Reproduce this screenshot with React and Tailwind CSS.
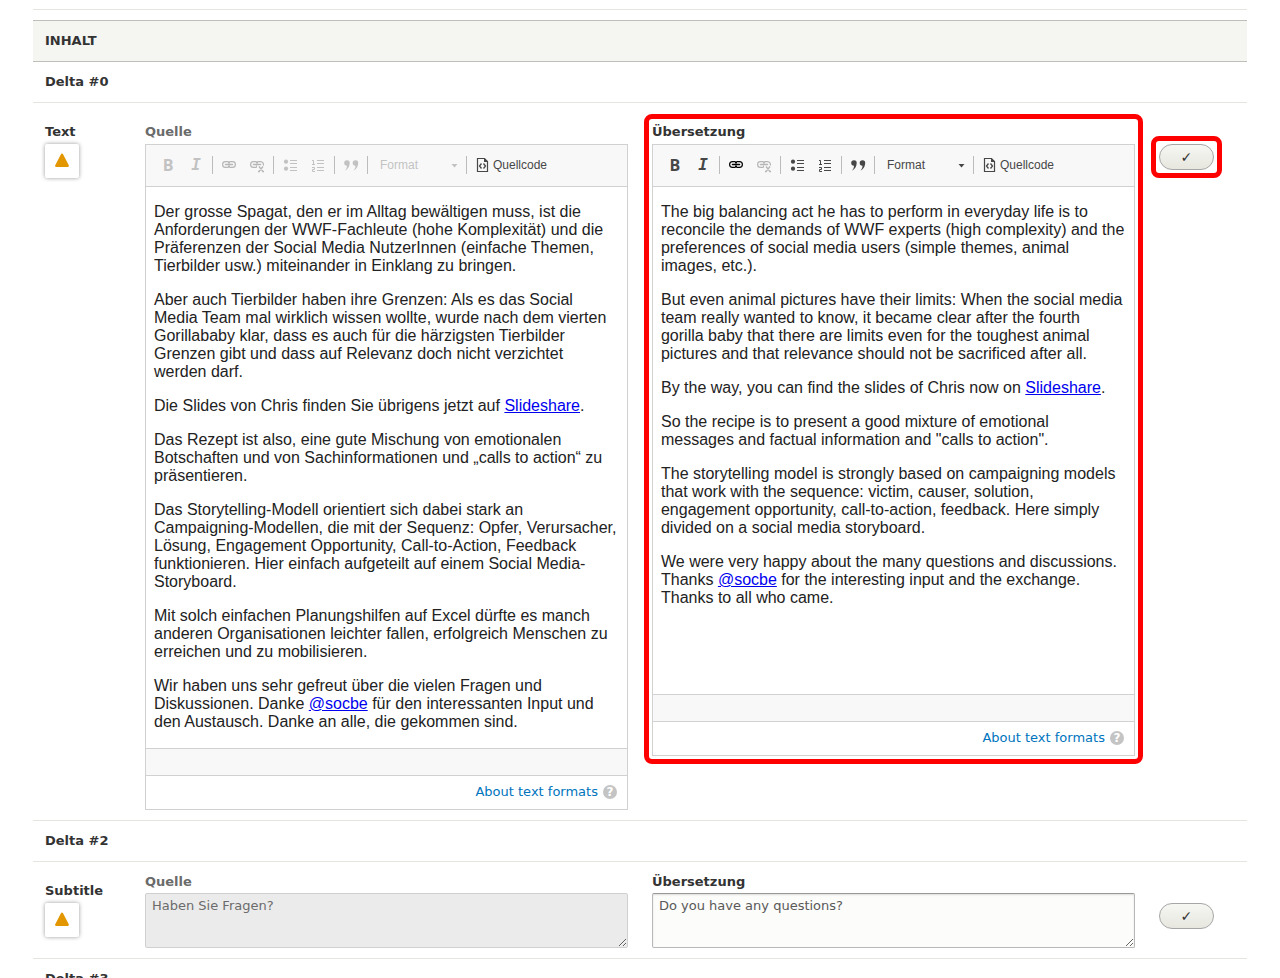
import React, { useState } from 'react';

const sourceParagraphs = [
  ['Der grosse Spagat, den er im Alltag bewältigen muss, ist die Anforderungen der WWF-Fachleute (hohe Komplexität) und die Präferenzen der Social Media NutzerInnen (einfache Themen, Tierbilder usw.) miteinander in Einklang zu bringen.'],
  ['Aber auch Tierbilder haben ihre Grenzen: Als es das Social Media Team mal wirklich wissen wollte, wurde nach dem vierten Gorillababy klar, dass es auch für die härzigsten Tierbilder Grenzen gibt und dass auf Relevanz doch nicht verzichtet werden darf.'],
  ['Die Slides von Chris finden Sie übrigens jetzt auf ', { anchor: 'Slideshare' }, '.'],
  ['Das Rezept ist also, eine gute Mischung von emotionalen Botschaften und von Sachinformationen und „calls to action“ zu präsentieren.'],
  ['Das Storytelling-Modell orientiert sich dabei stark an Campaigning-Modellen, die mit der Sequenz: Opfer, Verursacher, Lösung, Engagement Opportunity, Call-to-Action, Feedback funktionieren. Hier einfach aufgeteilt auf einem Social Media-Storyboard.'],
  ['Mit solch einfachen Planungshilfen auf Excel dürfte es manch anderen Organisationen leichter fallen, erfolgreich Menschen zu erreichen und zu mobilisieren.'],
  ['Wir haben uns sehr gefreut über die vielen Fragen und Diskussionen. Danke ', { anchor: '@socbe' }, ' für den interessanten Input und den Austausch. Danke an alle, die gekommen sind.'],
];

const targetParagraphs = [
  ['The big balancing act he has to perform in everyday life is to reconcile the demands of WWF experts (high complexity) and the preferences of social media users (simple themes, animal images, etc.).'],
  ['But even animal pictures have their limits: When the social media team really wanted to know, it became clear after the fourth gorilla baby that there are limits even for the toughest animal pictures and that relevance should not be sacrificed after all.'],
  ['By the way, you can find the slides of Chris now on ', { anchor: 'Slideshare' }, '.'],
  ['So the recipe is to present a good mixture of emotional messages and factual information and "calls to action".'],
  ['The storytelling model is strongly based on campaigning models that work with the sequence: victim, causer, solution, engagement opportunity, call-to-action, feedback. Here simply divided on a social media storyboard.'],
  ['We were very happy about the many questions and discussions. Thanks ', { anchor: '@socbe' }, ' for the interesting input and the exchange. Thanks to all who came.'],
];

function LinkIcon() {
  return (
    <svg width="16" height="16" viewBox="0 0 16 16" fill="none" stroke="currentColor">
      <path d="M7.500 4.600H4.500a2.900 2.900 0 0 0 0 5.800h3M8.500 4.600h3a2.900 2.900 0 0 1 0 5.800h-3" strokeWidth="1.200" />
      <path d="M7.500 4.500v2M8.500 4.500v2M7.500 8.500v2M8.500 8.500v2" strokeWidth="1" />
      <path d="M4.500 7.500h7" strokeWidth="1.500" strokeLinecap="round" />
    </svg>
  );
}

function UnlinkIcon() {
  return (
    <svg width="16" height="16" viewBox="0 0 16 16" fill="none" stroke="currentColor">
      <path d="M7.500 4.600H4.500a2.900 2.900 0 0 0 0 5.800h3M8.500 4.600h3a2.900 2.900 0 0 1 2.700 4" strokeWidth="1.200" />
      <path d="M7.500 4.500v2M8.500 4.500v2M7.500 8.500v2" strokeWidth="1" />
      <path d="M4.500 7.500h7" strokeWidth="1.500" strokeLinecap="round" />
      <path d="m10 9.500 4 5M14 9.500l-4 5M9 14.500h2M13 14.500h2" strokeWidth="1.300" />
    </svg>
  );
}

function BulletIcon() {
  return (
    <svg width="16" height="16" viewBox="0 0 16 16" fill="currentColor">
      <circle cx="4" cy="4.700" r="2.100" />
      <circle cx="4" cy="11.700" r="2.100" />
      <path d="M8 3h7v1H8zM8 6h7v1H8zM8 10h7v1H8zM8 13h7v1H8z" />
    </svg>
  );
}

function NumberIcon() {
  return (
    <svg width="16" height="16" viewBox="0 0 16 16" fill="currentColor">
      <path d="M2 3.500h1.500v4M2 7.500h3" fill="none" stroke="currentColor" />
      <path d="M2 10.500h2.500v2h-2v2H5" fill="none" stroke="currentColor" />
      <path d="M7 3h7v1H7zM7 6h7v1H7zM7 10h7v1H7zM7 13h7v1H7z" />
    </svg>
  );
}

function QuoteIcon() {
  return (
    <svg width="16" height="16" viewBox="0 0 16 16" fill="currentColor">
      <path d="M4 3.200a2.700 2.700 0 0 1 2.700 2.900c0 3.200-1.700 6-4.700 7.600 1.200-1.400 1.900-2.900 2-4.900a2.800 2.800 0 0 1 0-5.600z" />
      <path d="M12.500 3.200a2.700 2.700 0 0 1 2.700 2.900c0 3.200-1.700 6-4.700 7.600 1.200-1.400 1.900-2.900 2-4.900a2.800 2.800 0 0 1 0-5.600z" />
    </svg>
  );
}

function SourceIcon() {
  return (
    <svg width="16" height="16" viewBox="0 0 16 16" fill="none" stroke="#474747">
      <path d="M2.500 1.500h7l3 3v10h-10z" strokeWidth="1.200" />
      <path d="M9 1v4h4z" fill="#474747" stroke="none" />
      <path d="M6.500 6.500 4.500 9l2 2.500M8.500 6.500l2 2.500-2 2.500" strokeWidth="1.300" />
    </svg>
  );
}

function Separator() {
  return <span className="mx-[2px] h-[18px] w-px bg-[#bcbcbc]" />;
}

function ToolButton({ label, disabled, className = 'text-[#474747]', children }) {
  return (
    <button
      type="button"
      aria-label={label}
      disabled={disabled}
      className={`flex h-6 w-7 items-center justify-center disabled:opacity-30 ${className}`}
    >
      {children}
    </button>
  );
}

function Toolbar({ disabled }) {
  return (
    <div className="flex h-[42px] items-center border-b border-[#d1d1d1] bg-[#f8f8f8] px-2 pb-px font-['Liberation_Sans',Arial,sans-serif] text-xs">
      <ToolButton label="Fett" disabled={disabled}>
        <span className="font-['Open_Sans',sans-serif] text-base leading-4 font-bold">B</span>
      </ToolButton>
      <ToolButton label="Kursiv" disabled={disabled}>
        <span className="font-['DejaVu_Sans_Mono',monospace] text-base leading-4 font-bold italic">I</span>
      </ToolButton>
      <Separator />
      <ToolButton label="Link" disabled={disabled} className={disabled ? 'text-[#222]' : 'text-black'}>
        <LinkIcon />
      </ToolButton>
      <ToolButton label="Link entfernen" disabled className="text-[#222]">
        <UnlinkIcon />
      </ToolButton>
      <Separator />
      <ToolButton label="Liste" disabled={disabled}>
        <BulletIcon />
      </ToolButton>
      <ToolButton label="Nummerierte Liste" disabled={disabled}>
        <NumberIcon />
      </ToolButton>
      <Separator />
      <ToolButton label="Zitatblock" disabled={disabled}>
        <QuoteIcon />
      </ToolButton>
      <Separator />
      <div className={`relative ${disabled ? 'opacity-30' : ''}`}>
        <select
          aria-label="Format"
          disabled={disabled}
          className="h-6 w-[94px] appearance-none bg-transparent pl-[10px] text-[#474747] opacity-100"
        >
          <option>Format</option>
        </select>
        <svg className="pointer-events-none absolute top-[11px] right-[6px]" width="7" height="4" viewBox="0 0 7 4">
          <path d="M0.500 0h6l-3 3.500z" fill="#474747" />
        </svg>
      </div>
      <Separator />
      <button type="button" className="flex h-6 items-center gap-[2px] px-[6px] text-[#474747]">
        <SourceIcon />
        Quellcode
      </button>
    </div>
  );
}

function Editor({ label, paragraphs, readOnly }) {
  return (
    <div role="group" aria-label={label}>
      <div className={`mb-[3px] pt-px leading-[18px] font-bold ${readOnly ? 'text-[#6b6b6b]' : 'text-[#333]'}`}>{label}</div>
      <div className="border border-[#d1d1d1]">
        <Toolbar disabled={readOnly} />
        <div
          role="textbox"
          aria-multiline="true"
          aria-label={label}
          aria-readonly={readOnly}
          contentEditable={!readOnly}
          suppressContentEditableWarning
          className={`space-y-4 px-2 py-4 font-['Liberation_Sans',Arial,sans-serif] text-base leading-[18px] text-[#222] ${readOnly ? 'min-h-[561px]' : 'min-h-[507px]'}`}
        >
          {paragraphs.map((parts, i) => (
            <p key={i}>
              {parts.map((part, j) =>
                typeof part === 'string' ? (
                  part
                ) : (
                  <a key={j} href="#" className="text-[#0000ee] underline">{part.anchor}</a>
                )
              )}
            </p>
          ))}
        </div>
        <div className="h-7 border-y border-[#d1d1d1] bg-[#f8f8f8]" />
        <div className="flex h-[33px] items-center justify-end pr-[10px] pb-px">
          <a href="#" className="flex items-center gap-[5px] text-[#0074bd]">
            About text formats
            <span className="flex size-[14px] items-center justify-center rounded-full bg-[#c4c4c4] text-xs leading-[14px] font-bold text-white">?</span>
          </a>
        </div>
      </div>
    </div>
  );
}

function TextField({ id, label, value, disabled }) {
  const [text, setText] = useState(value);
  return (
    <div>
      <label htmlFor={id} className={`mb-[2px] block pt-px leading-[18px] font-bold ${disabled ? 'text-[#6b6b6b]' : 'text-[#333]'}`}>
        {label}
      </label>
      <textarea
        id={id}
        value={text}
        disabled={disabled}
        onChange={(e) => setText(e.target.value)}
        className="block h-[55px] w-full rounded-[2px] border border-[#b8b8b8] border-t-[#999] bg-[#fcfcfa] px-[6px] py-[3px] leading-[18px] text-[#595959] shadow-[inset_0_1px_2px_rgba(0,0,0,0.125)] disabled:border-[#d0d0d0] disabled:bg-[#ebebeb] disabled:text-[#6b6b6b] disabled:shadow-none"
      />
    </div>
  );
}

function ItemLabel({ children }) {
  return (
    <th scope="row" className="px-3 pt-5 text-left align-top font-bold">
      <div className="mb-[3px] leading-[18px]">{children}</div>
      <button
        type="button"
        aria-label="Status"
        className="flex size-[34px] items-center justify-center rounded-[2px] bg-white shadow-[0_0_4px_rgba(0,0,0,0.4)]"
      >
        <svg width="16" height="16" viewBox="0 0 16 16">
          <path d="M8 1.800 13.700 12.700H2.300z" fill="#e29700" stroke="#e29700" strokeWidth="2.400" strokeLinejoin="round" />
        </svg>
      </button>
    </th>
  );
}

function Highlight() {
  return <span className="pointer-events-none absolute -inset-2 rounded-lg border-5 border-[#ff0000]" />;
}

function ReviewCell({ highlighted }) {
  return (
    <td className="px-3 pt-[41px] align-top">
      <div className="relative w-[55px]">
        <button
          type="button"
          aria-label="Geprüft"
          className="flex h-[26px] w-full items-center justify-center rounded-full border border-[#a6a6a6] bg-linear-to-b from-[#f6f6f3] to-[#e7e7df] text-sm text-[#333]"
        >
          ✓
        </button>
        {highlighted && <Highlight />}
      </div>
    </td>
  );
}

function DeltaRow({ children }) {
  return (
    <tr>
      <th colSpan={4} className="h-[41px] border-b border-[#e6e4df] px-3 text-left font-bold">
        {children}
      </th>
    </tr>
  );
}

export default function App() {
  return (
    <div className="h-screen overflow-hidden bg-white px-[33px] font-['DejaVu_Sans',sans-serif] text-[13px] leading-[18px] text-[#333]">
      <div className="mb-[10px] h-[10px] border-b border-[#e6e4df]" />
      <table className="w-full table-fixed border-separate border-spacing-0">
        <colgroup>
          <col className="w-[100px]" />
          <col />
          <col />
          <col className="w-[100px]" />
        </colgroup>
        <thead>
          <tr>
            <th colSpan={4} className="h-[42px] border-y border-[#bfbfba] bg-[#f5f5f2] px-3 text-left font-bold uppercase">
              Inhalt
            </th>
          </tr>
        </thead>
        <tbody>
          <DeltaRow>Delta #0</DeltaRow>
          <tr className="*:border-b *:border-[#e6e4df]">
            <ItemLabel>Text</ItemLabel>
            <td className="px-3 pt-[19px] pb-[10px] align-top">
              <Editor label="Quelle" paragraphs={sourceParagraphs} readOnly />
            </td>
            <td className="px-3 pt-[19px] pb-[10px] align-top">
              <div className="relative">
                <Editor label="Übersetzung" paragraphs={targetParagraphs} />
                <Highlight />
              </div>
            </td>
            <ReviewCell highlighted />
          </tr>
          <DeltaRow>Delta #2</DeltaRow>
          <tr className="*:border-b *:border-[#e6e4df]">
            <ItemLabel>Subtitle</ItemLabel>
            <td className="px-3 py-[10px] align-top">
              <TextField id="subtitle-source" label="Quelle" value="Haben Sie Fragen?" disabled />
            </td>
            <td className="px-3 py-[10px] align-top">
              <TextField id="subtitle-translation" label="Übersetzung" value="Do you have any questions?" />
            </td>
            <ReviewCell />
          </tr>
          <DeltaRow>Delta #3</DeltaRow>
        </tbody>
      </table>
    </div>
  );
}
